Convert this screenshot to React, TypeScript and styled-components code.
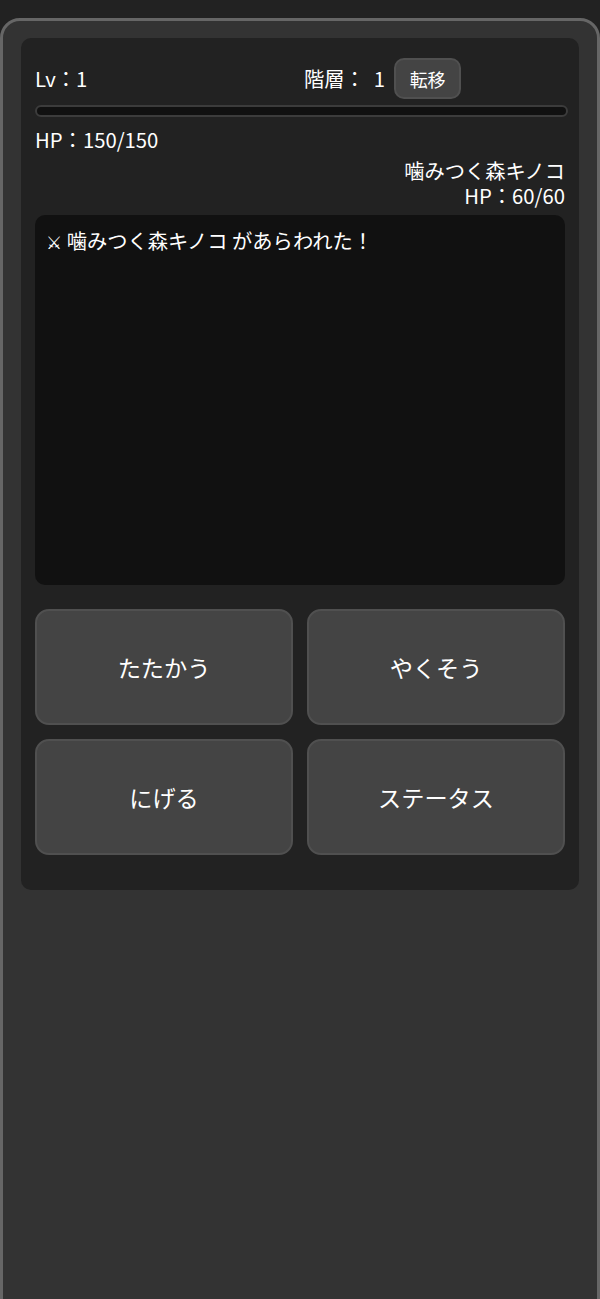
import React from 'react'
import styled, { createGlobalStyle } from 'styled-components'

const GlobalStyle = createGlobalStyle`
  html, body {
    margin: 0;
    padding: 0;
    height: 100%;
    background: #222222;
    overflow: hidden;
  }
  * {
    box-sizing: border-box;
  }
  body {
    color: #ffffff;
    font-family: "Noto Sans CJK JP", "Noto Sans", sans-serif;
  }
`

const Frame = styled.div`
  margin-top: 18px;
  height: 1320px;
  padding: 17px 18px;
  background: #333333;
  border: 3px solid #666666;
  border-radius: 20px;
`

const Panel = styled.main`
  background: #222222;
  border-radius: 10px;
  padding: 20px 14px 35px;
`

const TopRow = styled.div`
  display: grid;
  grid-template-columns: 269px 1fr;
  align-items: center;
  height: 40px;
`

const Stat = styled.div`
  font-size: 20.3px;
  line-height: 28px;
`

const Level = styled(Stat)`
  padding-bottom: 2px;
`

const Floor = styled.div`
  display: flex;
  align-items: center;
  font-size: 20.3px;
  line-height: 28px;
`

const FloorLabel = styled.span`
  padding-bottom: 2px;
`

const FloorValue = styled(FloorLabel)`
  margin-left: 9px;
  margin-right: 9px;
`

const WarpButton = styled.button`
  width: 67px;
  height: 41px;
  padding: 0;
  background: #444444;
  border: 2px solid #505050;
  border-radius: 10px;
  color: #ffffff;
  font-family: inherit;
  font-size: 18px;
`

const ExpTrack = styled.div`
  width: 533px;
  height: 12px;
  margin-top: 7px;
  background: #111111;
  border: 2px solid #3c3c3c;
  border-radius: 6px;
`

const PlayerHp = styled(Stat)`
  margin-top: 8px;
`

const EnemyInfo = styled.div`
  margin-top: 5px;
  text-align: right;
  font-size: 20.3px;
  line-height: 25px;
`

const LogBox = styled.div`
  height: 370px;
  margin-top: 7px;
  padding: 10px 11px;
  background: #111111;
  border-radius: 10px;
  font-size: 20.3px;
  line-height: 30px;
`

const Swords = styled.span`
  font-family: "DejaVu Sans", sans-serif;
  font-size: 18px;
`

const Commands = styled.div`
  display: grid;
  grid-template-columns: 1fr 1fr;
  gap: 14px;
  margin-top: 24px;
`

const CommandButton = styled.button`
  height: 116px;
  padding: 0;
  background: #444444;
  border: 2px solid #505050;
  border-radius: 14px;
  color: #ffffff;
  font-family: inherit;
  font-size: 23.2px;
`

const commands = ['たたかう', 'やくそう', 'にげる', 'ステータス']

export default function App() {
  return (
    <>
      <GlobalStyle />
      <Frame>
        <Panel>
          <TopRow>
            <Level>Lv：1</Level>
            <Floor>
              <FloorLabel>階層：</FloorLabel>
              <FloorValue>1</FloorValue>
              <WarpButton>転移</WarpButton>
            </Floor>
          </TopRow>
          <ExpTrack />
          <PlayerHp>HP：150/150</PlayerHp>
          <EnemyInfo>
            <div>噛みつく森キノコ</div>
            <div>HP：60/60</div>
          </EnemyInfo>
          <LogBox>
            <Swords>{'\u2694\uFE0E'}</Swords> 噛みつく森キノコ があらわれた！
          </LogBox>
          <Commands>
            {commands.map((label) => (
              <CommandButton key={label}>{label}</CommandButton>
            ))}
          </Commands>
        </Panel>
      </Frame>
    </>
  )
}
